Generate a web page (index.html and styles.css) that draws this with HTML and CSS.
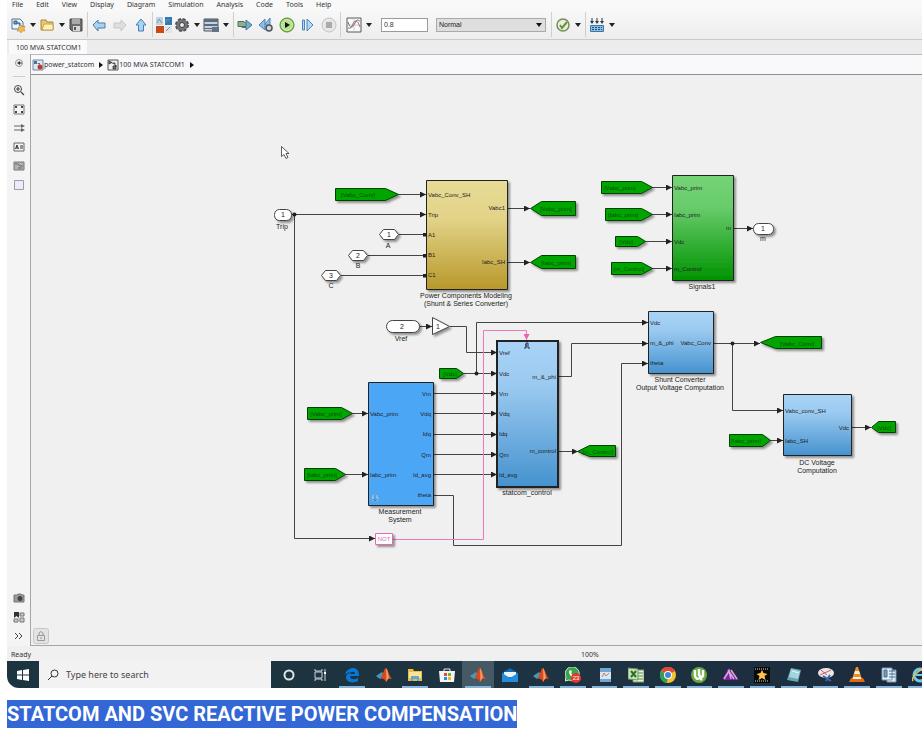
FILE: index.html
```html
<!DOCTYPE html>
<html lang="en">
<head>
<meta charset="utf-8">
<title>STATCOM and SVC reactive power compensation</title>
<link rel="stylesheet" href="styles.css">
</head>
<body>
<main class="page">
<section class="window">
  <nav class="menubar">
    <a href="#">File</a><a href="#">Edit</a><a href="#">View</a><a href="#">Display</a><a href="#">Diagram</a><a href="#">Simulation</a><a href="#">Analysis</a><a href="#">Code</a><a href="#">Tools</a><a href="#">Help</a>
  </nav>

  <div class="toolbar">
    <div class="group tight">
      <button class="split" aria-label="New"><svg class="icon" viewBox="0 0 16 16"><path d="M2 2h8l3 3v7H2z" fill="#eef5fc" stroke="#55718e"/><path d="M4 4h3v3H4zM7 6h3v3" fill="#69a3cf" stroke="#315d84"/><path d="M11 8l1 2 3-1-1 3 1 2-3 0-1 2-1-2-3 0 2-3-1-1h3z" fill="#f7bd45" stroke="#b77b22" stroke-width=".5"/></svg><i class="caret"></i></button>
      <button class="split" aria-label="Open"><svg class="icon" viewBox="0 0 16 16"><path d="M2 13V3h5l1 2h6v8z" fill="#eec66b" stroke="#a78649"/><path d="M3 13l2-6h9v6z" fill="#fff0b8" stroke="#c8a24f"/></svg><i class="caret"></i></button>
      <button aria-label="Save"><svg class="icon" viewBox="0 0 16 16"><path d="M2 2h12v12H4l-2-2z" fill="#6d6d70" stroke="#4a4a4d"/><path d="M4 2h8v5H4z" fill="#a9a9ac"/><path d="M5 9h7v5H5z" fill="#d5d5d5"/><path d="M6 10h2v3H6z" fill="#555"/></svg></button>
    </div>
    <div class="group">
      <button aria-label="Back"><svg class="icon" viewBox="0 0 16 16"><path d="M2 8l5-5v3h7v5H7v3z" fill="#a9d3f0" stroke="#477fae"/></svg></button>
      <button aria-label="Forward"><svg class="icon" viewBox="0 0 16 16"><path d="M14 8L9 3v3H2v5h7v3z" fill="#dedfe0" stroke="#c6c7c8"/></svg></button>
      <button aria-label="Up"><svg class="icon" viewBox="0 0 16 16"><path d="M8 2l5 6h-2.500v6h-5V8H3z" fill="#a9d3f0" stroke="#477fae"/></svg></button>
    </div>
    <div class="group tight">
      <button aria-label="Library browser"><svg class="icon" viewBox="0 0 16 16"><path d="M0 0h7v8H0z" fill="#c2d4e3"/><path d="M9 0h7v8H9z" fill="#3178b6"/><path d="M0 9h8v7H0z" fill="#c84a18"/><path d="M9 9h7v7H9z" fill="#e6e2e2"/><path d="M1 6l2-4 3 4M10 6V3h4M10 14l4-4" stroke="#7795ad" fill="none"/></svg></button>
      <button class="split" aria-label="Model settings"><svg class="icon" viewBox="0 0 16 16"><circle cx="8" cy="8" r="6" fill="#77787b" stroke="#525356" stroke-width="2" stroke-dasharray="3 1.700"/><circle cx="8" cy="8" r="5" fill="#747578"/><circle cx="8" cy="8" r="2.500" fill="#eee" stroke="#3c3c3e"/></svg><i class="caret"></i></button>
      <button class="split" aria-label="Model explorer"><svg class="icon" viewBox="0 0 16 16"><path d="M1 2h14v12H1z" fill="#c4d3df" stroke="#50565c"/><path d="M1 2h14v3H1zM1 7h14v2H1zM1 11h14v1H1z" fill="#5e6d7b"/><path d="M9 10h7v5H9z" fill="#607486"/></svg><i class="caret"></i></button>
    </div>
    <div class="group">
      <button aria-label="Update diagram"><svg class="icon" viewBox="0 0 16 16"><path d="M5 5.500h4V3l6 5-6 5v-2.500H5z" fill="#78aed0" stroke="#40739b"/><path d="M1 4.500h6l2 2v3H1z" fill="#8bb193" stroke="#52724f"/></svg></button>
      <button aria-label="Step back"><svg class="icon" viewBox="0 0 16 16"><path d="M7 2v11L1 8zM12 1v10L7 7z" fill="#8ebee5" stroke="#4d86b5"/><circle cx="11" cy="11" r="3" fill="#d2d4d5" stroke="#50565d" stroke-width="1.500"/></svg></button>
      <button aria-label="Run"><svg class="icon" viewBox="0 0 16 16"><circle cx="8" cy="8" r="7" fill="#8dcb58" stroke="#548a30"/><circle cx="8" cy="8" r="5.500" fill="#b5e08f" stroke="#d3efb9"/><path d="M6 5v6l5-3z" fill="#111"/></svg></button>
      <button aria-label="Step forward"><svg class="icon" viewBox="0 0 16 16"><path d="M2.500 3h2v10h-2zM7 2v12l6-6z" fill="#b1d7f2" stroke="#4d86b5"/></svg></button>
      <button aria-label="Stop"><svg class="icon" viewBox="0 0 16 16"><circle cx="8" cy="8" r="7" fill="#e7e7e7" stroke="#c3c3c3"/><path d="M5 5h6v6H5z" fill="#aaa"/></svg></button>
    </div>
    <div class="group fields">
      <button class="split" aria-label="Scope"><svg class="icon" viewBox="0 0 16 16"><path d="M1 1h14v14H1z" fill="#f9f9f9" stroke="#56585b"/><path d="M2 8h12M8 2v12" stroke="#cfd1d5"/><path d="M2 11c5 2 4-7 8-7 2 0 3 4 4 6" fill="none" stroke="#a65d62"/><path d="M2 5c2 7 5 6 7 1s4-2 5-2" fill="none" stroke="#62738e"/></svg><i class="caret"></i></button>
      <input class="stop-time" type="text" value="0.8" aria-label="Stop time">
      <div class="mode"><select aria-label="Simulation mode"><option>Normal</option></select></div>
    </div>
    <div class="group">
      <button class="split" aria-label="Advisor"><svg class="icon" viewBox="0 0 16 16"><circle cx="8" cy="8" r="6" fill="#e6efdc" stroke="#768c58" stroke-width="1.500"/><path d="M5 8l2 3 5-6" fill="none" stroke="#6b943b" stroke-width="2"/></svg><i class="caret"></i></button>
    </div>
    <div class="group last">
      <button class="split" aria-label="Build"><svg class="icon" viewBox="0 0 16 16"><path d="M3 1v4M8 1v4M13 1v4" stroke="#303943"/><path d="M1 4l2 3 2-3M6 4l2 3 2-3M11 4l2 3 2-3" fill="#303943"/><path d="M1.500 8.500h13v6h-13z" fill="#8dbde4" stroke="#3a78aa"/><path d="M3 10.500h10M3 12.500h10" stroke="#244e76" stroke-dasharray="2 1"/></svg><i class="caret"></i></button>
    </div>
  </div>

  <div class="tabs"><span class="tab">100 MVA STATCOM1</span></div>

  <div class="editor">
    <aside class="palette">
      <button aria-label="Hide browser"><svg class="glyph" viewBox="0 0 12 12"><circle cx="6" cy="6" r="3.500" fill="#eee" stroke="#999"/><path d="M4 6l3-2v4z" fill="#333"/><path d="M6 6h3" stroke="#333"/></svg></button>
      <hr>
      <button aria-label="Zoom"><svg class="glyph" viewBox="0 0 12 12"><circle cx="5" cy="5" r="3.500" fill="#f8f8f8" stroke="#444"/><path d="M3 5h4M5 3v4M8 8l3 3" stroke="#444" stroke-width="1.200"/></svg></button>
      <button aria-label="Fit to view"><svg class="glyph" viewBox="0 0 12 12"><path d="M1 2h10v9H1z" fill="#f4f4f4" stroke="#777"/><path d="M2 3h2v2H2zM8 3h2v2H8zM2 8h2v2H2zM8 8h2v2H8z" fill="#444"/></svg></button>
      <button aria-label="Sample time"><svg class="glyph" viewBox="0 0 12 12"><path d="M1 4h8M1 8h8" stroke="#666"/><path d="M8 2l4 2-4 2zM8 6l4 2-4 2z" fill="#666"/></svg></button>
      <button aria-label="Annotation"><svg class="glyph" viewBox="0 0 12 12"><path d="M1 2h10v8H1z" fill="#f4f4f4" stroke="#666"/><path d="M2.500 8L4 4l1.500 4M3 7h2M7 5h3M7 7h3" fill="none" stroke="#333"/></svg></button>
      <button aria-label="Image"><svg class="glyph" viewBox="0 0 12 12"><path d="M1 2h10v8H1z" fill="#b2b2b2" stroke="#777"/><path d="M2 4h3l2 2h3M5 8h4" fill="none" stroke="#666"/></svg></button>
      <button aria-label="Area"><svg class="glyph" viewBox="0 0 12 12"><path d="M1.500 1.500h9v9h-9z" fill="#ecebfa" stroke="#9c9cab"/></svg></button>
      <span class="spacer"></span>
      <button aria-label="Camera"><svg class="glyph" viewBox="0 0 12 12"><path d="M1 3h3l1-1h3l1 1h2v7H1z" fill="#999" stroke="#777"/><circle cx="7" cy="6.500" r="2.500" fill="#444"/></svg></button>
      <button aria-label="Bookmarks"><svg class="glyph" viewBox="0 0 12 12"><path d="M1 1h5v6L3.500 5 1 7z" fill="#333"/><path d="M7 2h4v3H7zM1 8h4v3H1zM7 7h4v4H7z" fill="#ccc" stroke="#777"/></svg></button>
      <button aria-label="More"><svg class="glyph" viewBox="0 0 12 12"><path d="M2 3l3 3-3 3M6 3l3 3-3 3" fill="none" stroke="#444"/></svg></button>
    </aside>

    <div class="model">
      <div class="crumbs">
        <svg class="crumb-icon" viewBox="0 0 12 12"><path d="M1 1h10v10H1z" fill="#dce9f3" stroke="#718699"/><path d="M2 2h3v3H2zM5 4h3v2" fill="#45759c"/><circle cx="8" cy="8" r="2.500" fill="#b9392e"/></svg>
        <a href="#">power_statcom</a><i class="arrow"></i>
        <svg class="crumb-icon" viewBox="0 0 12 12"><path d="M1 1h10v10H1z" fill="#f1f1f1" stroke="#555"/><path d="M2 2l3 1.500L2 5zM5 4h3v3h2M6 7h3v3H6z" fill="#777" stroke="#222" stroke-width=".7"/></svg>
        <a href="#">100 MVA STATCOM1</a><i class="arrow"></i>
      </div>
      <div class="canvas">
        <svg class="diagram" viewBox="31 75 891 570" role="img" aria-label="100 MVA STATCOM1 block diagram">
          <defs>
            <marker id="tip" markerUnits="userSpaceOnUse" viewBox="0 0 6 6" refX="6" refY="3" markerWidth="6" markerHeight="6" orient="auto"><path d="M0 0l6 3-6 3z"/></marker>
            <marker id="tip-pink" markerUnits="userSpaceOnUse" viewBox="0 0 6 6" refX="6" refY="3" markerWidth="6" markerHeight="6" orient="auto"><path d="M0 0l6 3-6 3z" fill="#e964ae"/></marker>
            <marker id="port" markerUnits="userSpaceOnUse" viewBox="0 0 4 4" refX="3" refY="2" markerWidth="4" markerHeight="4"><path d="M0 0h4v4H0z"/></marker>
            <linearGradient id="gold" x2="0" y2="1"><stop offset="0" stop-color="#e7db96"/><stop offset=".35" stop-color="#e2d388"/><stop offset="1" stop-color="#b8982b"/></linearGradient>
            <linearGradient id="green" x2="0" y2="1"><stop offset="0" stop-color="#74d476"/><stop offset=".3" stop-color="#69cb6b"/><stop offset="1" stop-color="#009300"/></linearGradient>
            <linearGradient id="blue" x2="0" y2="1"><stop offset="0" stop-color="#a9d3f7"/><stop offset=".3" stop-color="#9bcaf0"/><stop offset="1" stop-color="#4592cf"/></linearGradient>
            <filter id="shadow" x="-20%" y="-20%" width="150%" height="150%"><feDropShadow dx="2" dy="2" stdDeviation="1" flood-opacity=".4"/></filter>
          </defs>

          <g class="wires">
            <path d="M398 194.500H426M291 214.500H426M294.500 214.500V538.500H375M508 208.500H530M508 262.500H530"/>
            <path d="M652 187.500H672M652 214.500H672M645 241.500H672M652 268.500H672M733 228.500H753"/>
            <path d="M419 326.500H432M450 326.500H466.500V352.500H497M463 373.500H497M476.500 373.500V322.500H648"/>
            <path d="M433 393.500H497M433 413.500H497M433 434.500H497M433 454.500H497M433 474.500H497M433 495.500H453.500V545.500H621.500V363.500H648"/>
            <path d="M352 413.500H368M345 474.500H368M558 376.500H571.500V343.500H648M558 451.500H578"/>
            <path d="M713 343.500H760M732.500 343.500V410.500H783M770 440.500H783M851 427.500H871"/>
          </g>
          <g class="tips">
            <path d="M420 194.500h6"/><path d="M420 214.500h6"/><path d="M369 538.500h6"/><path d="M524 208.500h6"/><path d="M524 262.500h6"/>
            <path d="M666 187.500h6"/><path d="M666 214.500h6"/><path d="M666 241.500h6"/><path d="M666 268.500h6"/><path d="M747 228.500h6"/>
            <path d="M426 326.500h6"/><path d="M491 352.500h6"/><path d="M491 373.500h6"/><path d="M642 322.500h6"/>
            <path d="M491 393.500h6"/><path d="M491 413.500h6"/><path d="M491 434.500h6"/><path d="M491 454.500h6"/><path d="M491 474.500h6"/>
            <path d="M642 363.500h6"/><path d="M642 343.500h6"/><path d="M362 413.500h6"/><path d="M362 474.500h6"/><path d="M572 451.500h6"/>
            <path d="M754 343.500h6"/><path d="M777 410.500h6"/><path d="M777 440.500h6"/><path d="M865 427.500h6"/>
          </g>
          <g class="physical"><path d="M399 234.500H426"/><path d="M368 255.500H426"/><path d="M341 275.500H426"/></g>
          <path class="logic" d="M393 539.500H483.500V330.500H526.500V340"/>
          <g><circle cx="294.500" cy="214.500" r="2"/><circle cx="476.500" cy="373.500" r="2"/><circle cx="732.500" cy="343.500" r="2"/></g>

          <g class="blocks" filter="url(#shadow)">
            <path d="M426.500 180.500h81v109h-81z" fill="url(#gold)"/>
            <path d="M672.500 175.500h61v105h-61z" fill="url(#green)"/>
            <path d="M368.500 382.500h65v123h-65z" fill="#4ba7f6"/>
            <path d="M497 341h61v146h-61z" fill="url(#blue)" stroke-width="2"/>
            <path d="M648.500 311.500h65v62h-65z" fill="url(#blue)"/>
            <path d="M783.500 394.500h68v61h-68z" fill="url(#blue)"/>
          </g>
          <g class="terminals" filter="url(#shadow)">
            <rect x="274.500" y="209.500" width="17" height="11" rx="5"/>
            <rect x="386.500" y="320.500" width="33" height="12" rx="6"/>
            <rect x="753.500" y="223.500" width="20" height="11" rx="5"/>
            <path d="M379.500 234.500l4-5h11l4 5-4 5h-11zM348.500 255.500l4-5h11l4 5-4 5h-11zM321.500 275.500l4-5h11l4 5-4 5h-11z"/>
            <path d="M432.500 317.500l17 9-17 8z"/>
            <path class="not" d="M375.500 533.500h17v11h-17z"/>
          </g>
          <g class="tags" filter="url(#shadow)">
            <path d="M335.500 188.500h50l13 6-13 6h-50z"/>
            <path d="M601.500 181.500h40l11 6-11 6h-40z"/>
            <path d="M605.500 208.500h36l11 6-11 6h-36z"/>
            <path d="M615.500 236.500h22l8 5-8 5h-22z"/>
            <path d="M611.500 262.500h30l11 6-11 6h-30z"/>
            <path d="M575.500 201.500h-34l-11 7 11 7h34z"/>
            <path d="M575.500 255.500h-34l-11 7 11 6h34z"/>
            <path d="M307.500 407.500h34l11 6-11 6h-34z"/>
            <path d="M304.500 468.500h31l10 6-10 6h-31z"/>
            <path d="M439.500 368.500h17l7 5-7 5h-17z"/>
            <path d="M615.500 445.500h-26l-12 6 12 5h26z"/>
            <path d="M821.500 336.500h-46l-15 6 15 6h46z"/>
            <path d="M729.500 434.500h33l8 6-8 6h-33z"/>
            <path d="M895.500 421.500h-17l-7 6 7 5h17z"/>
          </g>

          <g class="tag-text">
            <text x="358" y="197">[Vabc_Conv]</text><text x="620" y="190">[Vabc_prim]</text><text x="623" y="217">[Iabc_prim]</text><text x="626" y="244">[Vdc]</text><text x="629" y="271">[m_Control]</text>
            <text x="556" y="211">[Vabc_prim]</text><text x="556" y="265">[Iabc_prim]</text><text x="326" y="416">[Vabc_prim]</text><text x="322" y="477">[Iabc_prim]</text><text x="450" y="376">[Vdc]</text>
            <text x="598" y="454">[m_Control]</text><text x="797" y="346">[Vabc_Conv]</text><text x="746" y="443">[Iabc_prim]</text><text x="884" y="430">[Vdc]</text>
          </g>
          <g class="ports">
            <text x="428" y="197">Vabc_Conv_SH</text><text x="428" y="217">Trip</text><text x="428" y="237">A1</text><text x="428" y="257">B1</text><text x="428" y="277">C1</text>
            <text x="674" y="190">Vabc_prim</text><text x="674" y="217">Iabc_prim</text><text x="674" y="244">Vdc</text><text x="674" y="271">m_Control</text>
            <text x="499" y="355">Vref</text><text x="499" y="376">Vdc</text><text x="499" y="396">Vm</text><text x="499" y="416">Vdq</text><text x="499" y="436">Idq</text><text x="499" y="457">Qm</text><text x="499" y="477">Id_avg</text>
            <text x="370" y="416">Vabc_prim</text><text x="370" y="477">Iabc_prim</text>
            <text x="650" y="325">Vdc</text><text x="650" y="345">m_&amp;_phi</text><text x="650" y="365">theta</text><text x="785" y="413">Vabc_conv_SH</text><text x="785" y="443">Iabc_SH</text>
          </g>
          <g class="ports right">
            <text x="505" y="210">Vabc1</text><text x="505" y="264">Iabc_SH</text><text x="731" y="230">m</text>
            <text x="431" y="396">Vm</text><text x="431" y="416">Vdq</text><text x="431" y="436">Idq</text><text x="431" y="457">Qm</text><text x="431" y="477">Id_avg</text><text x="431" y="497">theta</text>
            <text x="556" y="379">m_&amp;_phi</text><text x="556" y="453">m_control</text><text x="711" y="345">Vabc_Conv</text><text x="849" y="430">Vdc</text>
          </g>
          <g class="center">
            <text x="283" y="217">1</text><text x="282" y="229">Trip</text><text x="389" y="237">1</text><text x="388" y="248">A</text><text x="358" y="258">2</text><text x="358" y="268">B</text><text x="331" y="278">3</text><text x="331" y="288">C</text>
            <text x="763" y="231">1</text><text x="763" y="241">m</text><text x="402" y="329">2</text><text x="401" y="341">Vref</text><text x="438" y="329">1</text>
            <text x="466" y="298">Power Components Modeling</text><text x="466" y="306">(Shunt &amp; Series Converter)</text><text x="702" y="289">Signals1</text>
            <text x="400" y="514">Measurement</text><text x="400" y="522">System</text><text x="527" y="495">statcom_control</text>
            <text x="680" y="382">Shunt Converter</text><text x="680" y="390">Output Voltage Computation</text><text x="817" y="465">DC Voltage</text><text x="817" y="473">Computation</text>
            <text class="pink" x="384" y="541">NOT</text>
          </g>
          <path d="M524 348h2v-5h2v5h2M526 347v-3" fill="none" stroke="#234"/>
          <circle cx="375" cy="498" r="4" fill="#79c0f3" stroke="#5a9fc9" stroke-width=".7"/>
          <path d="M375 495v6M373 499l2 2 2-2" fill="none" stroke="#347db6"/>
          <path d="M281.500 146.500v10l2.500-2 2 4 2-1-2-4h3z" fill="#fff" stroke="#333" stroke-width=".8"/>
          <g><rect x="33.500" y="628.500" width="15" height="15" rx="2" fill="#e3e3e3" stroke="#c7c7c7"/><path d="M37.500 635.500h7v5h-7zM39 635v-2q2-3 4 0v2M41 637v2" fill="none" stroke="#999"/></g>
        </svg>
      </div>
    </div>
  </div>

  <footer class="status"><span>Ready</span><span>100%</span></footer>

  <div class="taskbar">
    <button class="start" aria-label="Start"><svg viewBox="0 0 12 12"><path d="M0 2l5-1v4.500H0zM6 1l6-1v5.500H6zM0 6.500h5V11l-5-1zM6 6.500h6V12l-6-1z" fill="#fff"/></svg></button>
    <label class="search"><svg viewBox="0 0 12 12"><circle cx="7.500" cy="4.500" r="3.500" fill="none" stroke="#333"/><path d="M5 7l-4 4" stroke="#333"/></svg><input type="text" placeholder="Type here to search" aria-label="Type here to search"></label>
    <div class="apps">
      <button aria-label="Cortana"><svg viewBox="0 0 16 16"><circle cx="8" cy="8" r="4.500" fill="none" stroke="#dfe4e7" stroke-width="2"/></svg></button>
      <button aria-label="Task view"><svg viewBox="0 0 16 16"><path d="M3 5h7v6H3zM3 2v2h7V2M3 14v-2h7v2M13 2v12" fill="none" stroke="#cbd3d7"/><path d="M12 5h2v2h-2z" fill="#fff"/></svg></button>
      <button class="open" aria-label="Edge"><svg viewBox="0 0 16 16"><path d="M1 8C2 3 6 1 9 1c4 0 6 3 6 8H6c0 4 5 4 8 2v3C8 17 2 15 2 10c0-2 2-4 5-5-3 0-5 2-6 3zm5-1h5c0-3-4-3-5 0z" fill="#0878d8"/></svg></button>
      <button aria-label="MATLAB"><svg viewBox="0 0 16 16"><path d="M0 9l6-4 2 3-4 4z" fill="#4798bf"/><path d="M6 7c2-1 2-6 4-6 2 2 3 7 6 11-3-1-4 0-6 3-1-3-3-4-5-3z" fill="#d64a22"/><path d="M10 1c2 2 2 7 3 10-1 0-2 2-3 4 1-6 0-10 0-14z" fill="#f5a46a"/></svg></button>
      <button class="open" aria-label="File Explorer"><svg viewBox="0 0 16 16"><path d="M1 2h5l1 2h8v10H1z" fill="#edbd43"/><path d="M2 5h12v6H2z" fill="#fbe495"/><path d="M4 9h8v5h-2v-2H6v2H4z" fill="#5ca9d6"/></svg></button>
      <button aria-label="Store"><svg viewBox="0 0 16 16"><path d="M5 5V2h6v3" fill="none" stroke="#eee"/><path d="M0 4h16l-1 11H1z" fill="#f4f4f4"/><path d="M5 6h3v3H5z" fill="#e44c27"/><path d="M9 6h3v3H9z" fill="#6fb42c"/><path d="M5 10h3v3H5z" fill="#2096d6"/><path d="M9 10h3v3H9z" fill="#f6b618"/></svg></button>
      <button class="open active" aria-label="MATLAB model"><svg viewBox="0 0 16 16"><path d="M0 9l6-4 2 3-4 4z" fill="#4798bf"/><path d="M6 7c2-1 2-6 4-6 2 2 3 7 6 11-3-1-4 0-6 3-1-3-3-4-5-3z" fill="#d64a22"/><path d="M10 1c2 2 2 7 3 10-1 0-2 2-3 4 1-6 0-10 0-14z" fill="#f5a46a"/></svg></button>
      <button aria-label="Mail"><svg viewBox="0 0 16 16"><path d="M0 6l8-5 8 5v9H0z" fill="#1269b5"/><path d="M2 5h12v5H2z" fill="#eaf4fa"/><path d="M0 6l8 5 8-5v9H0z" fill="#238cdb"/></svg></button>
      <button class="open" aria-label="MATLAB editor"><svg viewBox="0 0 16 16"><path d="M0 9l6-4 2 3-4 4z" fill="#4798bf"/><path d="M6 7c2-1 2-6 4-6 2 2 3 7 6 11-3-1-4 0-6 3-1-3-3-4-5-3z" fill="#d64a22"/><path d="M10 1c2 2 2 7 3 10-1 0-2 2-3 4 1-6 0-10 0-14z" fill="#f5a46a"/></svg></button>
      <button class="open" aria-label="WhatsApp, 23 messages"><svg viewBox="0 0 16 16"><path d="M0 14l1-4a7 7 0 1 1 3 3z" fill="#38a54a" stroke="#ddecdc"/><path d="M4 4c0 4 3 7 6 7l1-2-2-1-1 1-2-3 1-1-1-2z" fill="#fff"/><circle cx="11" cy="11" r="5" fill="#e3382e"/><text class="badge" x="11" y="13">23</text></svg></button>
      <button class="open" aria-label="Document"><svg viewBox="0 0 16 16"><path d="M3 1h11v14H3z" fill="#d6e7f5"/><path d="M3 1h11v4H3zM3 12h11v3H3z" fill="#6fa8d6"/><path d="M5 10l2-4 2 3 3-3" fill="none" stroke="#d67c58"/></svg></button>
      <button class="open" aria-label="Excel"><svg viewBox="0 0 16 16"><path d="M5 3h11v12H5z" fill="#e8f2d9" stroke="#73985e"/><path d="M9 6h6M9 9h6M9 12h6" stroke="#53894a"/><path d="M0 1l10 1v11l-10-1z" fill="#c8e2b4" stroke="#6d9660"/><path d="M3 4l5 6M8 4l-5 6" stroke="#287336" stroke-width="2"/></svg></button>
      <button class="open" aria-label="Chrome"><svg viewBox="0 0 16 16"><circle cx="8" cy="8" r="8" fill="#f5c32c"/><path d="M8 8L1 4a8 8 0 0 1 14 0z" fill="#df4935"/><path d="M8 8l-1 8A8 8 0 0 1 1 4z" fill="#319e56"/><circle cx="8" cy="8" r="4" fill="#fff"/><circle cx="8" cy="8" r="3" fill="#4384db"/></svg></button>
      <button class="open" aria-label="Torrent"><svg viewBox="0 0 16 16"><circle cx="8" cy="8" r="8" fill="#65aa3b"/><path d="M4 3v6q1 4 5 2l2 2M8 2v6q2 3 4 1V3" fill="none" stroke="#fff" stroke-width="2.500"/></svg></button>
      <button class="open" aria-label="Media tool"><svg viewBox="0 0 16 16"><path d="M0 11L6 1l10 12H1z" fill="#7925a6"/><path d="M1 12L6 4l2 8M5 3l6 9M8 3l6 9" fill="none" stroke="#d9a9d1" stroke-width="1.500"/></svg></button>
      <button class="open" aria-label="Video editor"><svg viewBox="0 0 16 16"><path d="M0 0h16v16H0z" fill="#090909"/><path d="M1 2h14M1 14h14" stroke="#ddd" stroke-dasharray="1 1"/><path d="M8 3l1.500 3 4 1-3 2 1 4-3.500-2-3.500 2 1-4-3-2 4-1z" fill="#ffc34c"/></svg></button>
      <button class="open" aria-label="Notepad"><svg viewBox="0 0 16 16"><path d="M5 1l10 2-3 12-11-2z" fill="#68a5b8"/><path d="M5 2l9 2-2 8-9-2z" fill="#a3d5df"/><path d="M6 4l7 2" stroke="#e5f5f7"/></svg></button>
      <button class="open" aria-label="Snipping Tool"><svg viewBox="0 0 16 16"><ellipse cx="8" cy="6" rx="8" ry="5" fill="#eee5e8"/><path d="M2 8l11-5M3 3l6 5" stroke="#c16369"/><path d="M5 9l8 5M8 14l4-6" stroke="#3469ac" stroke-width="2"/></svg></button>
      <button class="open" aria-label="VLC"><svg viewBox="0 0 16 16"><path d="M2 11h12l2 4H0z" fill="#df6914"/><path d="M7 0h2l4 12H3z" fill="#f18b22"/><path d="M6 4h4l1 3H5zM4 10h8v2H4z" fill="#f5eee6"/></svg></button>
      <button class="open" aria-label="Word"><svg viewBox="0 0 16 16"><path d="M6 3h9v12H6z" fill="#dceaf5" stroke="#6e95b5"/><path d="M1 1h10v12H1z" fill="#e3eef5" stroke="#7696ae"/><path d="M3 3h3v7H3zM8 4h6M8 7h6M8 10h6" fill="#769bb5" stroke="#466f8d"/></svg></button>
      <button class="open" aria-label="Internet Explorer"><svg viewBox="0 0 16 16"><circle cx="8" cy="8" r="6" fill="none" stroke="#71c8ef" stroke-width="3"/><path d="M4 8h8" stroke="#71c8ef" stroke-width="2"/><path d="M1 14C-2 11 8 1 14 2" fill="none" stroke="#e9c44d" stroke-width="1.500"/></svg></button>
    </div>
  </div>
</section>
<h1><mark>STATCOM AND SVC REACTIVE POWER COMPENSATION</mark></h1>
</main>
</body>
</html>
```
FILE: styles.css
```css
* { box-sizing: border-box; }
body { margin: 0; background: #fff; font-family: "Noto Sans", "Open Sans", sans-serif; overflow-x: hidden; }
button { display: flex; align-items: center; justify-content: center; padding: 0; border: 0; background: none; }
a { color: inherit; text-decoration: none; }
svg { display: block; }

.page { padding-left: 7px; }
.window { display: flex; flex-direction: column; overflow: hidden; border-bottom-left-radius: 12px; background: #f0f0f0; color: #333; font-size: 7px; line-height: 10px; }

.menubar { display: flex; gap: 13px; height: 10px; padding-left: 5px; background: #f9f9f9; line-height: 9px; }

.toolbar { display: flex; height: 30px; padding: 2px 0; border-bottom: 1px solid #c9c9c9; background: linear-gradient(#f8f8f8, #ededed); }
.group { display: flex; align-items: center; gap: 5px; padding: 0 3px; border-right: 1px solid #cfcfcf; }
.group.tight { gap: 2px; }
.group.fields { gap: 8px; padding: 0 5px; }
.group.last { border: 0; }
.icon { width: 16px; height: 16px; }
.split { gap: 4px; }
.caret { border: 3px solid transparent; border-top: 4px solid #222; border-bottom: 0; margin-right: 1px; }
.stop-time { width: 47px; height: 14px; padding: 0 2px; border: 1px solid #9a9a9a; background: #fff; color: #333; font: 7px "Liberation Sans", sans-serif; }
.mode { position: relative; width: 110px; height: 14px; }
.mode select { appearance: none; width: 100%; height: 100%; padding: 0 2px; border: 1px solid #aaa; border-radius: 0; background: #dedede; color: #222; font: 7px "Liberation Sans", sans-serif; }
.mode::after { content: ""; position: absolute; right: 4px; top: 5px; border: 3px solid transparent; border-top: 4px solid #111; border-bottom: 0; }

.tabs { display: flex; height: 14px; padding-left: 2px; background: #ececec; }
.tab { padding: 3px 6px 0 7px; background: #fafafa; }

.editor { display: flex; }
.palette { display: flex; flex-direction: column; align-items: center; gap: 7px; width: 24px; padding: 3px 0 4px; border-right: 1px solid #a6a6a6; background: #f4f4f4; }
.palette hr { width: 12px; margin: 0; border: 0; border-top: 1px solid #ccc; }
.glyph { width: 12px; height: 12px; }
.spacer { flex: 1; }
.model { flex: 1; min-width: 0; border-top: 1px solid #bbb; }
.crumbs { display: flex; align-items: center; height: 20px; padding-left: 1px; border-bottom: 1px solid #8f8f8f; background: #f9f9fb; }
.crumb-icon { width: 12px; height: 12px; }
.arrow { margin: 0 4px 0 5px; border: 3px solid transparent; border-left: 4px solid #111; border-right: 0; }
.canvas { border-bottom: 1px solid #a6a6a6; background: #f0f0f0; }
.diagram { width: 100%; height: auto; font: 7px "Liberation Sans", sans-serif; fill: #222; }
.wires path, .tips path, .physical path { fill: none; stroke: #444; }
.tips path { marker-end: url(#tip); }
.physical path { marker-end: url(#port); }
.logic { fill: none; stroke: #ee78bb; marker-end: url(#tip-pink); }
.blocks path { stroke: #222; }
.terminals { fill: #fff; stroke: #444; }
.terminals .not { stroke: #e06cb4; }
.tags { fill: #06a506; stroke: #064206; }
.tag-text { fill: #064d06; font-size: 6px; text-anchor: middle; }
.ports { font-size: 6px; }
.right { text-anchor: end; }
.center { text-anchor: middle; }
.center .pink { fill: #e06cb4; font-size: 6px; }

.status { display: grid; grid-template-columns: 570px 1fr; align-items: center; height: 15px; padding: 3px 0 0 4px; background: #f0f0f0; }

.taskbar { display: flex; height: 27px; background: linear-gradient(90deg, #1c3440, #1e3341 60%, #1c2b3e); }
.start { width: 32px; }
.start svg, .search svg { width: 12px; height: 12px; }
.search { display: flex; align-items: center; gap: 7px; width: 232px; padding-left: 8px; background: #f2f2f2; }
.search input { flex: 1; min-width: 0; padding: 0; border: 0; background: none; font: 9px "Noto Sans", sans-serif; }
.search input::placeholder { color: #444; opacity: 1; }
.apps { display: flex; flex: 1; min-width: 0; margin-right: -14px; padding-left: 2px; }
.apps button { position: relative; flex: 1; min-width: 0; }
.apps svg { width: 16px; height: 16px; }
.open::after { content: ""; position: absolute; left: 3px; right: 3px; bottom: 0; height: 2px; background: #86b5dc; }
.apps .active { background: #465a65; }
.badge { fill: #fff; font: 6px "Liberation Sans", sans-serif; text-anchor: middle; }

h1 { margin: 12px 0 0; font: 700 20px/28px Roboto, sans-serif; }
mark { display: inline-block; background: #3367d6; color: #fff; }
```
